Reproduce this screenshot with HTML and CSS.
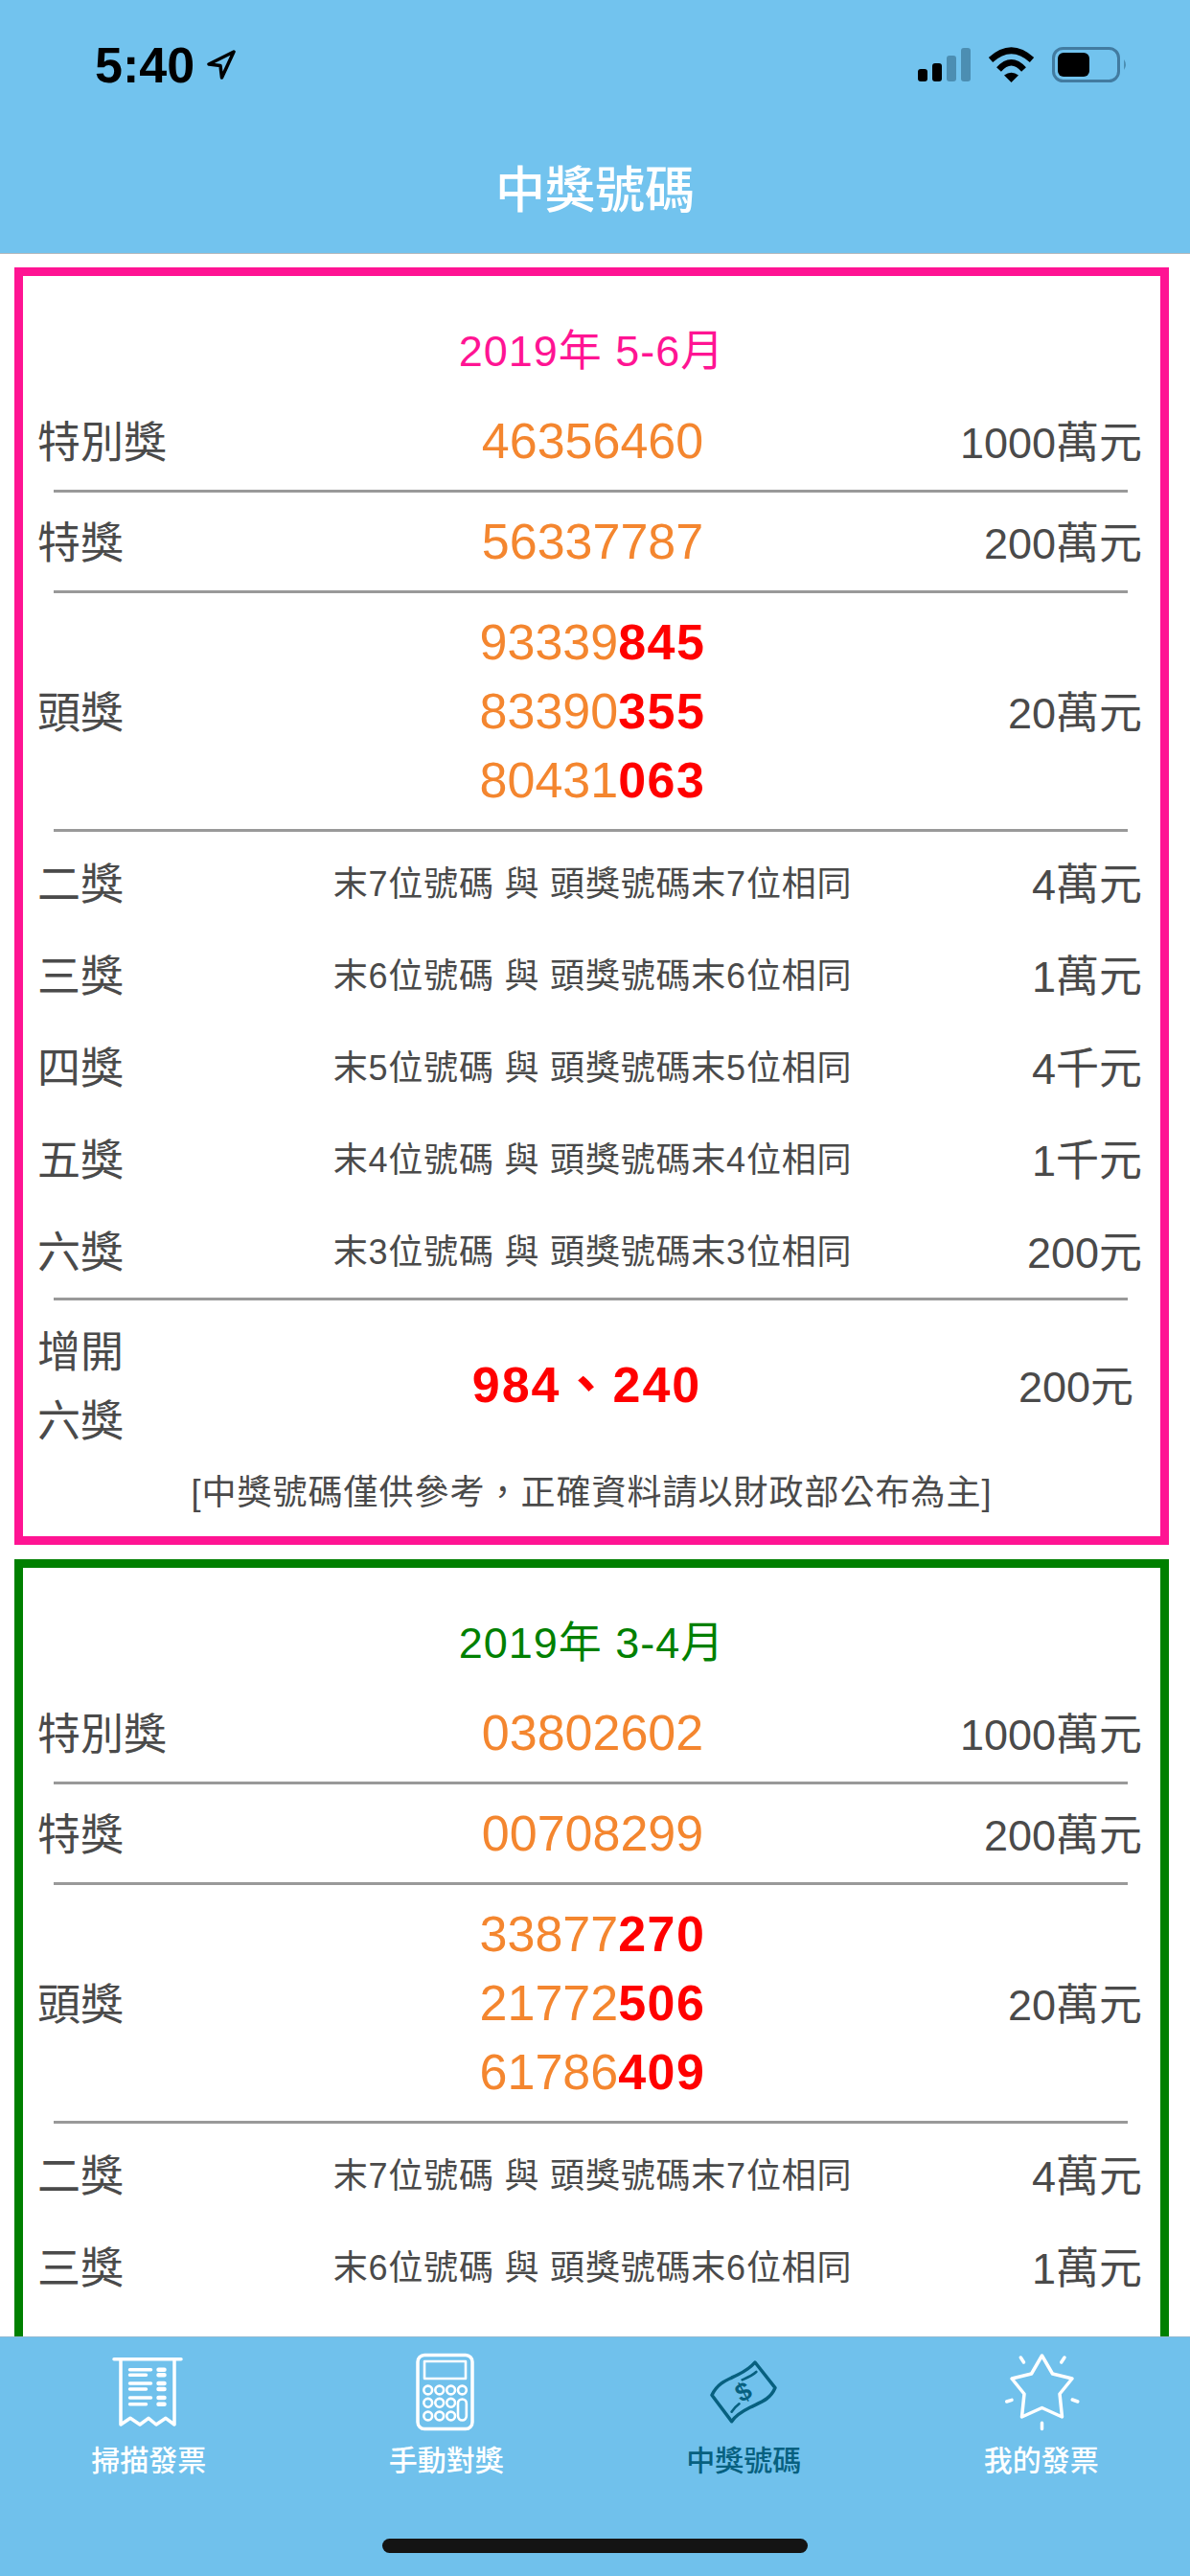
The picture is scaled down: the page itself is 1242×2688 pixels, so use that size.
FILE: index.html
```html
<!DOCTYPE html>
<html lang="zh-Hant">
<head>
<meta charset="utf-8">
<title>中獎號碼</title>
<link rel="stylesheet" href="styles.css">
</head>
<body>
<div class="app">
  <header class="header">
    <div class="status">
      <div class="status-left">
        <span class="time">5:40</span>
        <svg class="nav-arrow" viewBox="0 0 31 31"><path d="M29 2 L3 15 L15 16.5 L16.5 29 Z"/></svg>
      </div>
      <div class="status-right">
        <svg class="signal" viewBox="0 0 55 35">
          <rect x="0" y="22" width="10" height="13" rx="3"/>
          <rect x="15" y="16" width="10" height="19" rx="3"/>
          <rect class="dim" x="30" y="8" width="10" height="27" rx="3"/>
          <rect class="dim" x="45" y="0" width="10" height="35" rx="3"/>
        </svg>
        <svg class="wifi" viewBox="0 0 49 36">
          <path class="arc" d="M3 12.5 Q24.5 -7 46 12.5"/>
          <path class="arc" d="M11.5 22.5 Q24.5 8 37.5 22.5"/>
          <path d="M24.5 36 L17 28.5 Q24.5 23 32 28.5 Z"/>
        </svg>
        <svg class="battery" viewBox="0 0 79 37">
          <rect class="shell" x="1.5" y="1.5" width="68" height="34" rx="10"/>
          <rect x="6" y="6" width="33" height="25" rx="6"/>
          <path class="dim" d="M75 13 Q79 18.500 75 24 Z"/>
        </svg>
      </div>
    </div>
    <h1 class="page-title">中獎號碼</h1>
  </header>

  <main class="content">
    <section class="card card-pink">
      <h2 class="card-title">2019年 5-6月</h2>
      <div class="row"><div class="label">特別獎</div><div class="num">46356460</div><div class="amount">1000萬元</div></div>
      <hr class="rule">
      <div class="row"><div class="label">特獎</div><div class="num">56337787</div><div class="amount">200萬元</div></div>
      <hr class="rule">
      <div class="row"><div class="label">頭獎</div><div class="num"><div>93339<b>845</b></div><div>83390<b>355</b></div><div>80431<b>063</b></div></div><div class="amount">20萬元</div></div>
      <hr class="rule">
      <div class="low-group">
        <div class="row low"><div class="label">二獎</div><div class="desc">末7位號碼 與 頭獎號碼末7位相同</div><div class="amount">4萬元</div></div>
        <div class="row low"><div class="label">三獎</div><div class="desc">末6位號碼 與 頭獎號碼末6位相同</div><div class="amount">1萬元</div></div>
        <div class="row low"><div class="label">四獎</div><div class="desc">末5位號碼 與 頭獎號碼末5位相同</div><div class="amount">4千元</div></div>
        <div class="row low"><div class="label">五獎</div><div class="desc">末4位號碼 與 頭獎號碼末4位相同</div><div class="amount">1千元</div></div>
        <div class="row low"><div class="label">六獎</div><div class="desc">末3位號碼 與 頭獎號碼末3位相同</div><div class="amount">200元</div></div>
      </div>
      <hr class="rule">
      <div class="row extra"><div class="label">增開<br>六獎</div><div class="num wide"><b>984、240</b></div><div class="amount inset">200元</div></div>
      <p class="note">[中獎號碼僅供參考，正確資料請以財政部公布為主]</p>
    </section>

    <section class="card card-green">
      <h2 class="card-title">2019年 3-4月</h2>
      <div class="row"><div class="label">特別獎</div><div class="num">03802602</div><div class="amount">1000萬元</div></div>
      <hr class="rule">
      <div class="row"><div class="label">特獎</div><div class="num">00708299</div><div class="amount">200萬元</div></div>
      <hr class="rule">
      <div class="row"><div class="label">頭獎</div><div class="num"><div>33877<b>270</b></div><div>21772<b>506</b></div><div>61786<b>409</b></div></div><div class="amount">20萬元</div></div>
      <hr class="rule">
      <div class="low-group">
        <div class="row low"><div class="label">二獎</div><div class="desc">末7位號碼 與 頭獎號碼末7位相同</div><div class="amount">4萬元</div></div>
        <div class="row low"><div class="label">三獎</div><div class="desc">末6位號碼 與 頭獎號碼末6位相同</div><div class="amount">1萬元</div></div>
        <div class="row low"><div class="label">四獎</div><div class="desc">末5位號碼 與 頭獎號碼末5位相同</div><div class="amount">4千元</div></div>
      </div>
    </section>
  </main>

  <nav class="tabbar">
    <div class="tabs">
      <div class="tab">
        <svg class="tab-icon" viewBox="0 0 80 80">
          <path d="M4 5.700 H74 M11 5.700 V74 L21 67.300 L31 74 L40 67.300 L48 74 L58 67.300 L67 74 V5.700"/>
          <path d="M20.500 16.700 H42.500 M20.500 22.300 H37.500 M20.500 31 H42.500 M20.500 37 H37.500 M20.500 46 H42.500 M20.500 52.700 H37.500"/>
          <path class="thick" d="M50.500 16.700 H56.500 M50.500 22.300 H56.500 M50.500 31 H56.500 M50.500 37 H56.500 M50.500 46 H56.500 M50.500 52.700 H56.500"/>
        </svg>
        <span class="tab-label">掃描發票</span>
      </div>
      <div class="tab">
        <svg class="tab-icon" viewBox="0 0 80 80">
          <rect x="10" y="1.500" width="57" height="77" rx="7"/>
          <rect x="17" y="8" width="43" height="18" class="fine"/>
          <g class="fine">
            <circle cx="20.700" cy="38" r="4.400"/><circle cx="32.700" cy="38" r="4.400"/><circle cx="44.600" cy="38" r="4.400"/><circle cx="56.400" cy="38" r="4.400"/>
            <circle cx="20.700" cy="51.300" r="4.400"/><circle cx="32.700" cy="51.300" r="4.400"/><circle cx="44.600" cy="51.300" r="4.400"/>
            <circle cx="20.700" cy="65" r="4.400"/><circle cx="32.700" cy="65" r="4.400"/><circle cx="44.600" cy="65" r="4.400"/>
            <rect x="52" y="47.500" width="8.800" height="22" rx="4.400"/>
          </g>
        </svg>
        <span class="tab-label">手動對獎</span>
      </div>
      <div class="tab active">
        <svg class="tab-icon" viewBox="0 0 80 80">
          <path d="M7 43.300 C13 30 24 27 34 22 C42 18 47 15 52 9 L73 35.700 C68 48 57 51 47 56 C39 60 32 64 27.600 70.700 Z"/>
          <path class="fine" d="M38.700 27.300 C44 25 49 23 53.300 19 M27.600 60.700 C30 57 32 55 35.500 52.300"/>
          <text class="dollar" x="40" y="49" transform="rotate(-28 40 40)">$</text>
        </svg>
        <span class="tab-label">中獎號碼</span>
      </div>
      <div class="tab">
        <svg class="tab-icon" viewBox="0 0 80 80">
          <path d="M40.500 2 L51.500 21 L72 26 L59 42 L61.500 66 L40.500 56.500 L19.500 66 L22 42 L9 26 L29.500 21 Z"/>
          <path d="M18.300 4 L21.500 9 M64 4 L60.700 9 M3.700 50 L9 48.300 M77.800 50 L72.200 48 M40.500 72.300 V78.500"/>
        </svg>
        <span class="tab-label">我的發票</span>
      </div>
    </div>
    <div class="home-indicator"></div>
  </nav>
</div>
</body>
</html>
```
FILE: styles.css
```css
* { box-sizing: border-box; }
html, body { margin: 0; padding: 0; }
body {
  width: 1242px;
  height: 2688px;
  overflow: hidden;
  background: #fff;
  font-family: "Liberation Sans", "Noto Sans CJK TC", sans-serif;
  color: #4a4a4a;
}
.app { display: flex; flex-direction: column; height: 2688px; }

/* header */
.header {
  height: 265px;
  flex: none;
  background: #72c3ee;
  border-bottom: 1px solid #b4b9bc;
  display: flex;
  flex-direction: column;
}
.status {
  height: 135px;
  flex: none;
  display: flex;
  align-items: center;
  justify-content: space-between;
  padding: 0 65px 0 99px;
}
.status-left { display: flex; align-items: center; gap: 12px; }
.time { font-size: 52px; font-weight: 700; color: #000; line-height: 1; }
.nav-arrow { width: 31px; height: 31px; fill: none; stroke: #000; stroke-width: 3.5; stroke-linejoin: round; }
.status-right { display: flex; align-items: center; }
.signal { width: 55px; height: 35px; fill: #000; margin-right: 18px; }
.wifi { width: 49px; height: 36px; fill: #000; margin-right: 18px; overflow: visible; }
.wifi .arc { fill: none; stroke: #000; stroke-width: 6.5; }
.battery { width: 79px; height: 37px; fill: #000; }
.battery .shell { fill: none; stroke: #427ba0; stroke-width: 3; }
.dim { fill: #4c8eb2; }
.page-title {
  margin: 0;
  flex: 1;
  padding-bottom: 11px;
  display: flex;
  align-items: center;
  justify-content: center;
  font-family: "Noto Sans CJK TC", sans-serif;
  font-size: 52px;
  font-weight: 500;
  color: #fff;
}

/* content */
.content {
  flex: 1;
  min-height: 0;
  overflow: hidden;
  padding: 14px 22px 0 15px;
}
.card { border: 9px solid; padding: 43px 0 9px; margin-bottom: 15px; }
.card-pink { border-color: #ff1493; }
.card-green { border-color: #008000; }
.card-title {
  margin: 0 0 6px;
  text-align: center;
  font-size: 45px;
  font-weight: 400;
  line-height: 71px;
  padding-bottom: 1px;
  letter-spacing: 1px;
}
.card-pink .card-title { color: #ff1493; }
.card-green .card-title { color: #008000; }

.row {
  display: grid;
  grid-template-columns: 245px 1fr 239px;
  align-items: center;
  padding: 15px 19px 15px 15px;
  font-size: 45px;
  line-height: 72px;
}
.label, .amount { padding-top: 3px; margin-bottom: -3px; }
.num { text-align: center; font-size: 52px; color: #f4862f; }
.num b { color: #f00; font-weight: 700; letter-spacing: 1.5px; }
.wide { padding-right: 12px; }
.wide b { letter-spacing: 2px; }
.amount { text-align: right; }
.inset { padding-right: 9px; }
.rule { height: 3px; margin: 0 34px 0 32px; border: 0; background: #999; }
.low-group { padding: 5px 0 1px; }
.low { padding: 0 19px 0 15px; height: 96px; }
.desc { text-align: center; font-size: 36px; white-space: nowrap; letter-spacing: 0.8px; padding-top: 3px; }
.extra { padding: 16px 19px 5px 15px; }
.note { margin: 0; text-align: center; font-size: 36px; line-height: 72px; letter-spacing: 1px; }

/* tab bar */
.tabbar {
  height: 250px;
  flex: none;
  background: #70c1ec;
  border-top: 1px solid #90b9d2;
  padding-top: 17px;
  display: flex;
  flex-direction: column;
  position: relative;
}
.tabs { display: grid; grid-template-columns: repeat(4, 1fr); }
.tab { display: flex; flex-direction: column; align-items: center; color: #fff; }
.tab-icon {
  width: 80px;
  height: 80px;
  fill: none;
  stroke: currentColor;
  stroke-width: 3.5;
  stroke-linecap: round;
  stroke-linejoin: round;
  overflow: visible;
}
.tab-icon .thick { stroke-width: 4.500; }
.tab-icon .fine { stroke-width: 2.600; }
.tab-icon .dollar {
  font-family: "Liberation Sans", sans-serif;
  font-size: 27px;
  font-weight: 700;
  text-anchor: middle;
  fill: currentColor;
  stroke: none;
}
.tab-label {
  margin-top: 9px;
  font-family: "Noto Sans CJK TC", sans-serif;
  font-size: 30px;
  line-height: 40px;
  font-weight: 500;
}
.active { color: #07607f; }
.home-indicator {
  width: 444px;
  height: 15px;
  margin: 64px auto 0;
  border-radius: 8px;
  background: #141414;
}
```
